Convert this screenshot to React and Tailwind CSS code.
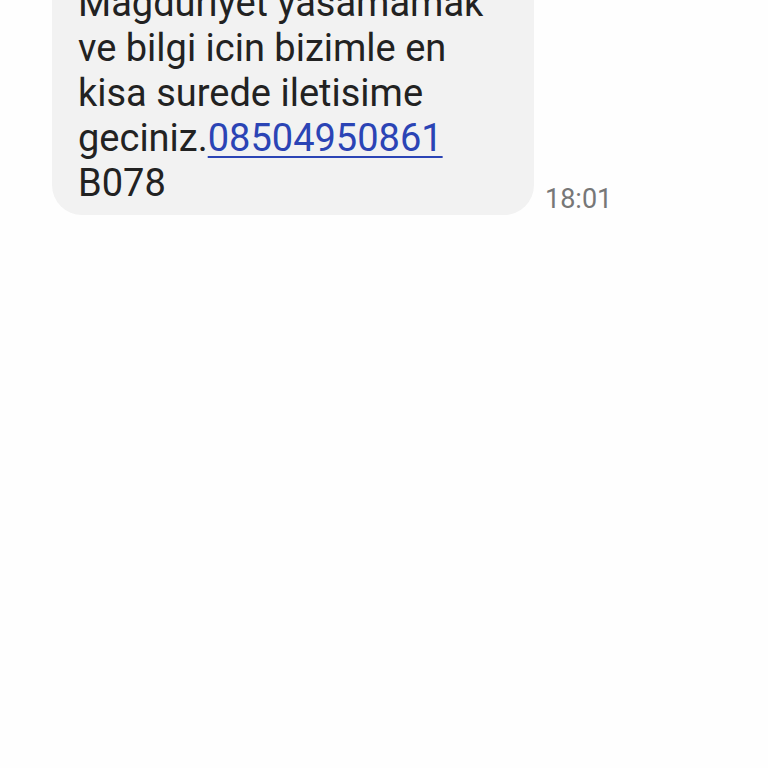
export default function App() {
  return (
    <div
      className="h-screen w-full overflow-hidden bg-[#fefefe]"
      style={{ fontFamily: 'Roboto, "Noto Sans", sans-serif' }}
    >
      <div className="flex items-end gap-[11px] pl-[52px] -mt-[31px]">
        <div className="w-[482px] rounded-[30px] bg-[#f2f2f2] pl-[26px] pr-4 pt-[12px] pb-[9px] text-[38px] leading-[45px] text-[#222222]">
          Magduriyet yasamamak
          <br />
          ve bilgi icin bizimle en
          <br />
          kisa surede iletisime
          <br />
          geciniz.
          <a href="#" className="text-[#2b44b5] underline decoration-[2px] underline-offset-[5px]">
            08504950861
          </a>
          <br />
          B078
        </div>
        <span className="text-[27px] leading-[32px] text-[#777777]">18:01</span>
      </div>
    </div>
  )
}
